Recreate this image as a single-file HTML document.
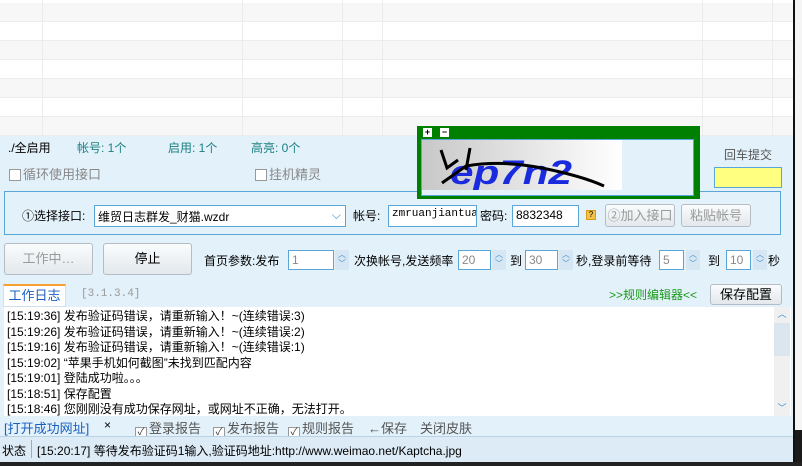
<!DOCTYPE html><html><head><meta charset="utf-8"><style>
*{margin:0;padding:0;box-sizing:border-box}
body{width:802px;height:466px;overflow:hidden;background:#1a1a1a;font-family:"Liberation Sans","Noto Sans CJK SC",sans-serif;font-size:12px;color:#000;position:relative}
.a{position:absolute;white-space:nowrap}
.win{position:absolute;left:0;top:0;width:793px;height:462px;background:#e3f1fa}
.tb{position:absolute;left:0;top:0;width:793px;height:136px;background:#fff}
.row{position:absolute;left:0;width:793px;height:19px;border-bottom:1px solid #ececec}
.vl{position:absolute;top:0;width:1px;height:136px;background:#ececec}
.cb{display:inline-block;width:12px;height:12px;border:1px solid #999;background:#fff;vertical-align:-2px;margin-right:2px;font-size:10px;line-height:10px;text-align:center;color:#333}
.inp{position:absolute;background:#fff;border:1px solid #5aa6d6;font-size:12px;padding:2px 3px;height:20px}
.btn{position:absolute;border:1px solid #b5bcc4;border-radius:3px;background:linear-gradient(#fafcfd,#e3e8ec);text-align:center;color:#999}
.sp{position:absolute;width:14px;height:20px;background:#d6e6f2;color:#3a8fd0;font-size:8px;line-height:9px;text-align:center}
.teal{color:#1a8080}
</style></head><body>
<div class="win">
<div class="tb">
<div class="row" style="top:3px;background:#f7f7f7"></div>
<div class="row" style="top:22px;background:#fff"></div>
<div class="row" style="top:41px;background:#f7f7f7"></div>
<div class="row" style="top:60px;background:#fff"></div>
<div class="row" style="top:79px;background:#f7f7f7"></div>
<div class="row" style="top:98px;background:#fff"></div>
<div class="row" style="top:117px;background:#f7f7f7"></div>
<div class="vl" style="left:42px"></div><div class="vl" style="left:242px"></div><div class="vl" style="left:342px"></div><div class="vl" style="left:382px"></div><div class="vl" style="left:702px"></div><div class="vl" style="left:772px"></div>
</div>
<div class="a" style="left:8px;top:139px">./全启用</div>
<div class="a teal" style="left:77px;top:139px">帐号: 1个</div>
<div class="a teal" style="left:168px;top:139px">启用: 1个</div>
<div class="a teal" style="left:251px;top:139px">高亮: 0个</div>
<div class="a" style="left:9px;top:164px;color:#888;font-size:13px"><span class="cb"></span>循环使用接口</div>
<div class="a" style="left:255px;top:164px;color:#888;font-size:13px"><span class="cb"></span>挂机精灵</div>
<div class="a" style="left:4px;top:191px;width:777px;height:44px;border:1px solid #5aa6d6"></div>
<div class="a" style="left:22px;top:207px">①选择接口:</div>
<div class="inp" style="left:94px;top:205px;width:252px;height:22px">维贸日志群发_财猫.wzdr<span style="position:absolute;right:4px;top:2px;color:#3a8fd0">⌵</span></div>
<div class="a" style="left:353px;top:207px">帐号:</div>
<div class="inp" style="left:388px;top:205px;width:89px;height:22px;font-family:'Liberation Mono',monospace;font-size:11px;overflow:hidden">zmruanjiantuan</div>
<div class="a" style="left:480px;top:207px">密码:</div>
<div class="inp" style="left:512px;top:205px;width:67px;height:22px">8832348</div>
<div class="a" style="left:586px;top:210px;width:10px;height:10px;background:#f4c24a;border:1px solid #d99a1a;font-size:8px;line-height:8px;text-align:center">?</div>
<div class="btn" style="left:605px;top:204px;width:70px;height:23px;line-height:21px;font-size:13px">②加入接口</div>
<div class="btn" style="left:681px;top:204px;width:70px;height:23px;line-height:21px;font-size:13px">粘贴帐号</div>
<div class="a" style="left:417px;top:126px;width:283px;height:73px;background:#008000"></div>
<div class="a" style="left:423px;top:128px;width:9px;height:9px;background:#fff;font-size:9px;line-height:9px;text-align:center;font-weight:bold">+</div>
<div class="a" style="left:440px;top:128px;width:9px;height:9px;background:#fff;font-size:9px;line-height:9px;text-align:center;font-weight:bold">−</div>
<div class="a" style="left:421px;top:139px;width:273px;height:57px;background:#e3f1fa;border:1px solid #5aa6d6"></div>
<div class="a" style="left:422px;top:140px;width:200px;height:50px;background:linear-gradient(90deg,#c8c8c8,#f4f4f4 80%,#fff)"></div>
<svg class="a" style="left:422px;top:140px" width="200" height="50"><text x="28" y="44" font-size="34" font-weight="bold" font-style="italic" fill="#1a2adf" textLength="122" lengthAdjust="spacingAndGlyphs" font-family="Liberation Sans,sans-serif">ep7n2</text><path d="M19 10 L25 28 L36 20 M48 8 L44 30 M20 43 L44 26 Q80 20 120 28 T182 46" stroke="#000" stroke-width="3" fill="none"/></svg>
<div class="a" style="left:724px;top:146px;color:#555">回车提交</div>
<div class="a" style="left:714px;top:167px;width:68px;height:21px;background:#ffff80;border:1px solid #5aa6d6"></div>
<div class="btn" style="left:4px;top:243px;width:89px;height:32px;line-height:30px;font-size:13px">工作中…</div>
<div class="btn" style="left:103px;top:243px;width:89px;height:32px;line-height:30px;color:#000;font-size:13px">停止</div>
<div class="a" style="left:204px;top:252px">首页参数:发布</div>
<div class="inp" style="left:288px;top:250px;width:46px;color:#888">1</div><div class="sp" style="left:335px;top:250px">︿<br>﹀</div>
<div class="a" style="left:354px;top:252px">次换帐号,发送频率</div>
<div class="inp" style="left:458px;top:250px;width:33px;color:#888">20</div><div class="sp" style="left:492px;top:250px">︿<br>﹀</div>
<div class="a" style="left:510px;top:252px">到</div>
<div class="inp" style="left:525px;top:250px;width:33px;color:#888">30</div><div class="sp" style="left:559px;top:250px">︿<br>﹀</div>
<div class="a" style="left:576px;top:252px">秒,登录前等待</div>
<div class="inp" style="left:659px;top:250px;width:25px;color:#888">5</div><div class="sp" style="left:686px;top:250px">︿<br>﹀</div>
<div class="a" style="left:708px;top:252px">到</div>
<div class="inp" style="left:726px;top:250px;width:25px;color:#888">10</div><div class="sp" style="left:753px;top:250px">︿<br>﹀</div>
<div class="a" style="left:768px;top:252px">秒</div>
<div class="a" style="left:3px;top:284px;width:63px;height:23px;background:#fff;border:1px solid #cfe0ec;border-top:2px solid #f5a030;color:#1a60c0;text-align:center;line-height:20px;font-size:13px">工作日志</div>
<div class="a" style="left:81px;top:288px;color:#999;font-family:'Liberation Mono',monospace;font-size:11px">[3.1.3.4]</div>
<div class="a" style="left:609px;top:286px;color:#1a9a1a">&gt;&gt;规则编辑器&lt;&lt;</div>
<div class="btn" style="left:710px;top:284px;width:72px;height:21px;line-height:19px;color:#000;font-size:13px">保存配置</div>
<div class="a" style="left:4px;top:307px;width:787px;height:109px;background:#fff;overflow:hidden;font-size:12px;line-height:15.5px;padding:2px 0 0 3px">
[15:19:36] 发布验证码错误，请重新输入！~(连续错误:3)<br>[15:19:26] 发布验证码错误，请重新输入！~(连续错误:2)<br>[15:19:16] 发布验证码错误，请重新输入！~(连续错误:1)<br>[15:19:02] “苹果手机如何截图”未找到匹配内容<br>[15:19:01] 登陆成功啦。。。<br>[15:18:51] 保存配置<br>[15:18:46] 您刚刚没有成功保存网址，或网址不正确，无法打开。
<div style="position:absolute;right:1px;top:0;width:16px;height:109px;background:#f0f0f0"><div style="position:absolute;top:16px;left:0;width:16px;height:33px;background:#dbe6ee"></div><div style="position:absolute;top:0;width:16px;text-align:center;color:#3a8fd0;font-size:9px">︿</div><div style="position:absolute;bottom:0;width:16px;text-align:center;color:#3a8fd0;font-size:9px">﹀</div></div>
</div>
<div class="a" style="left:4px;top:418px;color:#1a60c0;font-size:13px">[打开成功网址]</div>
<div class="a" style="left:104px;top:418px">×</div>
<div class="a" style="left:135px;top:418px;color:#555;font-size:13px"><span class="cb">✓</span>登录报告</div>
<div class="a" style="left:213px;top:418px;color:#555;font-size:13px"><span class="cb">✓</span>发布报告</div>
<div class="a" style="left:288px;top:418px;color:#555;font-size:13px"><span class="cb">✓</span>规则报告</div>
<div class="a" style="left:368px;top:418px;color:#555;font-size:13px">←保存</div>
<div class="a" style="left:420px;top:418px;color:#555;font-size:13px">关闭皮肤</div>
<div class="a" style="left:0;top:436px;width:793px;height:26px;background:#dcebf6;border-top:1px solid #b8d3e6"></div>
<div class="a" style="left:2px;top:442px">状态</div>
<div class="a" style="left:31px;top:440px;width:1px;height:18px;background:#aaa"></div>
<div class="a" style="left:37px;top:442px">[15:20:17] 等待发布验证码1输入,验证码地址:http://www.weimao.net/Kaptcha.jpg</div>
</div>
<div class="a" style="left:793px;top:0;width:2px;height:466px;background:#111"></div>
<div class="a" style="left:795px;top:0;width:7px;height:430px;background:#f5f5f5"></div>
<div class="a" style="left:0;top:462px;width:802px;height:4px;background:#222"></div>
</body></html>
